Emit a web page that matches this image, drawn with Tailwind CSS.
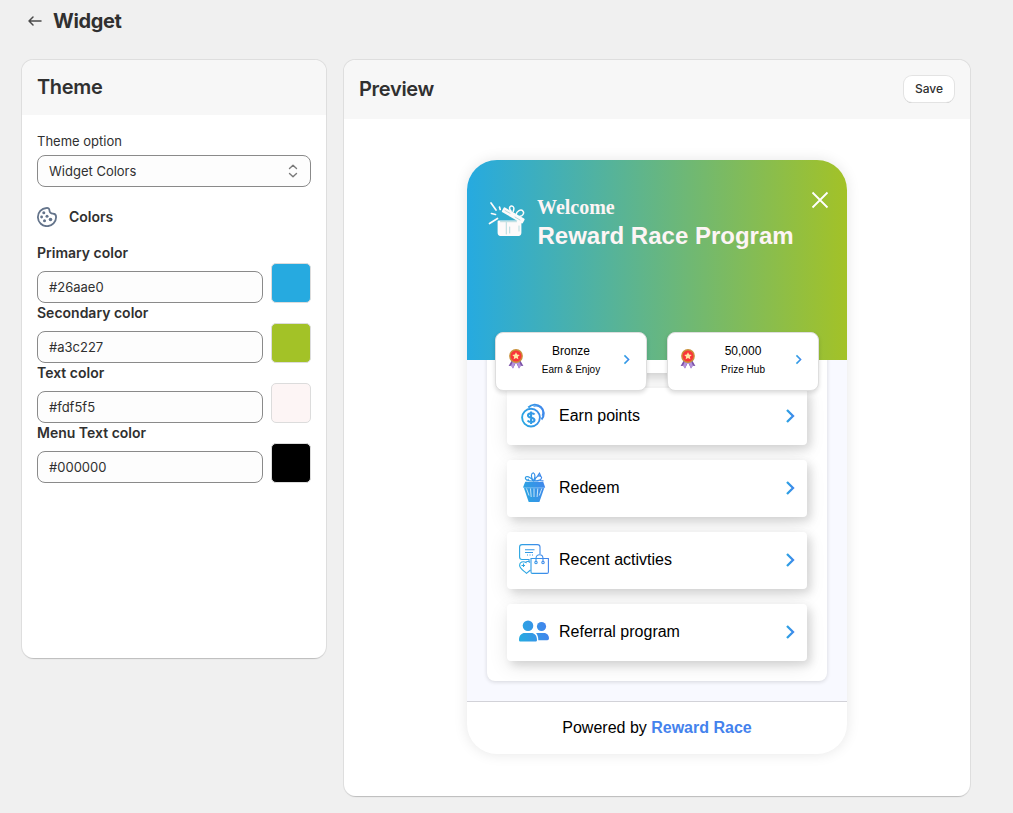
<!DOCTYPE html>
<html lang="en">
<head>
<meta charset="utf-8">
<title>Widget</title>
<script src="https://cdn.jsdelivr.net/npm/@tailwindcss/browser@4"></script>
</head>
<body class="w-[1013px] h-[813px] overflow-hidden bg-[#f0f0f0] font-[Inter,sans-serif] text-[#303030] text-[13px] leading-5">
<svg class="absolute size-0" aria-hidden="true">
  <defs>
    <linearGradient id="blueC" gradientUnits="userSpaceOnUse" x1="0" y1="8" x2="10" y2="8"><stop offset="0" stop-color="#26aae0"/><stop offset="1" stop-color="#4482ed"/></linearGradient>
    <linearGradient id="blueU" gradientUnits="userSpaceOnUse" x1="0" y1="20" x2="30" y2="12"><stop offset="0" stop-color="#26aae0"/><stop offset="1" stop-color="#4482ed"/></linearGradient>
    <symbol id="medal" viewBox="0 0 16 20">
      <path d="M4 11 .6 17l2.700-.2L5 19.600 8 13.500Z" fill="#7b52a8"/><path d="m12 11 3.400 6-2.700-.2L11 19.600 8 13.500Z" fill="#7b52a8"/>
      <path d="m5 12-2 4.700L5 19.400l2.500-6Z" fill="#b592dc"/><path d="m11 12 2 4.700L11 19.400l-2.500-6Z" fill="#b592dc"/>
      <circle cx="8" cy="7" r="6.900" fill="#c9913a"/><circle cx="8" cy="7" r="5.500" fill="#fa3538"/>
      <path d="m8 3.200 1.150 2.400 2.600.35-1.900 1.800.5 2.600L8 9.100l-2.350 1.250.5-2.600-1.900-1.800 2.600-.35Z" fill="#ffe7a3"/>
    </symbol>
    <symbol id="chev" viewBox="0 0 10 16"><path d="m2 2 6 6-6 6" fill="none" stroke="url(#blueC)" stroke-width="2.300"/></symbol>
  </defs>
</svg>

<header class="flex items-center h-[42px] pl-[27px]">
  <svg class="w-4 h-4" viewBox="0 0 16 16" fill="none" stroke="#4a4a4a" stroke-width="1.500" stroke-linecap="round" stroke-linejoin="round"><path d="M14 8H2M6 4 2 8l4 4"/></svg>
  <h1 class="ml-[10px] text-xl font-bold leading-6 tracking-[-0.350px]">Widget</h1>
</header>

<main class="flex items-start pl-[22px] pt-[17px] gap-[18px]">
  <section class="w-[304px] h-[599px] rounded-xl bg-white overflow-hidden border-t border-[#dedede] shadow-[1px_0_0_#dedede,-1px_0_0_#dedede,0_1px_1px_#bbb]">
    <h2 class="h-[55px] bg-[#f7f7f7] pl-[15px] pt-[15px] text-xl leading-6 font-semibold tracking-[-0.350px]">Theme</h2>
    <div class="px-[15px] pt-4">
      <div class="h-6 leading-[21px]">Theme option</div>
      <div class="h-8 w-[274px] rounded-lg border border-[#8a8a8a] bg-[#fdfdfd] flex items-center justify-between pl-[11px] pr-3">
        <span>Widget Colors</span>
        <svg class="w-[10px] h-[14px]" viewBox="0 0 10 14" fill="none" stroke="#7a7a7a" stroke-width="1.400" stroke-linecap="round" stroke-linejoin="round"><path d="m1.500 4.500 3.500-3.300 3.500 3.300M1.500 9.500 5 12.800l3.500-3.300"/></svg>
      </div>
      <div class="mt-5 h-5 flex items-center gap-3">
        <svg class="w-5 h-5" viewBox="0 0 20 20"><path d="M9.500 1C11.500.8 12.300 1.700 12.400 3c.1 2.300 1.200 3.600 3.500 3.600 2 0 3.200 1.200 3.200 3.400A9.100 9.100 0 1 1 9.500 1Z" fill="none" stroke="#64748b" stroke-width="1.800"/><g fill="#64748b"><circle cx="6.800" cy="5.700" r="1.500"/><circle cx="4.600" cy="10" r="1.400"/><circle cx="10" cy="9.300" r="1.500"/><circle cx="7.500" cy="13.700" r="1.500"/><circle cx="13.500" cy="12.500" r="1.800"/></g></svg>
        <span class="font-semibold text-[14px]">Colors</span>
      </div>
      <div class="mt-4 flex flex-col">
        <div class="h-[60px]"><div class="h-5 font-semibold text-[14px]">Primary color</div><div class="flex items-end gap-2 h-10"><div class="w-[226px] h-8 rounded-lg border border-[#8a8a8a] bg-[#fdfdfd] pl-[11px] leading-[31px]">#26aae0</div><div class="w-10 h-10 rounded-[5px] border border-[#dcdcdc] bg-[#26aae0]"></div></div></div>
        <div class="h-[60px]"><div class="h-5 font-semibold text-[14px]">Secondary color</div><div class="flex items-end gap-2 h-10"><div class="w-[226px] h-8 rounded-lg border border-[#8a8a8a] bg-[#fdfdfd] pl-[11px] leading-[31px]">#a3c227</div><div class="w-10 h-10 rounded-[5px] border border-[#dcdcdc] bg-[#a3c227]"></div></div></div>
        <div class="h-[60px]"><div class="h-5 font-semibold text-[14px]">Text color</div><div class="flex items-end gap-2 h-10"><div class="w-[226px] h-8 rounded-lg border border-[#8a8a8a] bg-[#fdfdfd] pl-[11px] leading-[31px]">#fdf5f5</div><div class="w-10 h-10 rounded-[5px] border border-[#dcdcdc] bg-[#fdf5f5]"></div></div></div>
        <div class="h-[60px]"><div class="h-5 font-semibold text-[14px]">Menu Text color</div><div class="flex items-end gap-2 h-10"><div class="w-[226px] h-8 rounded-lg border border-[#8a8a8a] bg-[#fdfdfd] pl-[11px] leading-[31px]">#000000</div><div class="w-10 h-10 rounded-[5px] border border-[#dcdcdc] bg-black"></div></div></div>
      </div>
    </div>
  </section>

  <section class="w-[626px] h-[737px] rounded-xl bg-white overflow-hidden border-t border-[#dedede] shadow-[1px_0_0_#dedede,-1px_0_0_#dedede,0_1px_1px_#bbb]">
    <div class="h-[59px] bg-[#f7f7f7] flex items-center justify-between pl-[15px] pr-4">
      <h2 class="text-xl leading-6 font-semibold tracking-[-0.300px] -mt-[2px]">Preview</h2>
      <button class="w-[50px] h-[26px] -mt-px rounded-lg bg-white font-medium text-[12px] leading-4 shadow-[0_0_0_1px_#e3e3e3,0_1px_0_0_#b5b5b5]">Save</button>
    </div>

    <div class="relative mt-[41px] ml-[123px] w-[380px] h-[594px] rounded-[30px] bg-white flex flex-col font-['Liberation_Sans',sans-serif] text-black shadow-[0_0_14px_rgba(0,0,0,0.100)]">
      <div class="h-[200px] shrink-0 rounded-t-[30px] bg-linear-to-r/srgb from-[#26aae0] to-[#a3c227] flex items-start pl-[21px] pr-[18px] pt-[35px] text-[#fdf5f5]">
        <svg class="w-[38px] h-[38px] mt-[5px]" viewBox="0 0 38 38" fill="none" stroke="#fdfafa" stroke-linecap="round" stroke-linejoin="round">
          <path d="m3 3 5 7M1.500 23.500l8-5M3.500 13.500l4 1M11.500 7l.7 2.500" stroke-width="1.700"/>
          <path d="m16.500 8.500 19 11-1.500 2.800-19-11Z" fill="#fdfafa" stroke-width="2.200"/>
          <path d="M23 11c-3-3-.5-6.500 2-4.500 1.500 1.200.8 3.500.2 5M28 15c.5-4 5-6.300 7-3.800 1.800 2.400-1 5-3 5.100" stroke-width="1.500"/>
          <path d="M10.500 21.500h22v11q0 2.500-2 2.500h-18q-2 0-2-2.500Z" fill="#fdfafa" stroke-width="1.800"/>
          <path d="M18.300 22.500v11.500M21.700 27v6M12.500 21.700h16M31 26v5M17 10.500l5 2.800M27 17l5 3" stroke="#a5d3d8" stroke-width=".8"/>
        </svg>
        <div class="ml-[12px] flex-1">
          <div class="font-['Liberation_Serif',serif] font-bold text-[20px] leading-6 -ml-px">Welcome</div>
          <div class="font-bold text-[24px] leading-[33px] whitespace-nowrap -ml-[0.500px]">Reward Race Program</div>
        </div>
        <svg class="w-[18px] h-[18px] -mt-[4px]" viewBox="0 0 18 18" stroke="#fff" stroke-width="1.800"><path d="m1.500 1.500 15 15m0-15-15 15"/></svg>
      </div>

      <div class="h-[341px] shrink-0 overflow-hidden bg-[#f8f9ff] px-5">
        <div class="-mt-16 h-[385px] rounded-lg bg-white p-5 flex flex-col gap-[15px] overflow-hidden shadow-[0_1px_4px_rgba(0,0,0,0.140)]">
          <div class="h-[57px] shrink-0 rounded bg-white shadow-[4px_4px_8px_rgba(0,0,0,0.120),0_6px_20px_rgba(0,0,0,0.090)]"></div>
          <div class="h-[57px] shrink-0 rounded bg-white flex items-center pl-3 pr-3 pb-[3px] shadow-[4px_4px_8px_rgba(0,0,0,0.120),0_6px_20px_rgba(0,0,0,0.090)]">
            <svg class="w-[30px] h-[30px]" viewBox="0 0 30 30" fill="none" stroke="url(#blueU)" stroke-width="1.900"><path d="M9.300 7.500A8.700 8.700 0 1 1 22.500 19.500"/><path d="M14.500 6.300a7 7 0 0 1 8.700 9.500" stroke-width="1.200"/><circle cx="12" cy="17.600" r="8.900"/><path d="M15.500 14.500c-1-1.700-6.500-1.700-6.500.9 0 3 6.500 1.500 6.500 4.500 0 2.600-5.700 2.600-6.900.6M12.100 11.600v12.300" stroke-width="2.100"/></svg>
            <span class="ml-[10px] flex-1 text-base leading-5 pt-[2px]">Earn points</span>
            <svg class="w-[10px] h-4 mt-px"><use href="#chev"/></svg>
          </div>
          <div class="h-[57px] shrink-0 rounded bg-white flex items-center pl-3 pr-3 pb-[3px] shadow-[4px_4px_8px_rgba(0,0,0,0.120),0_6px_20px_rgba(0,0,0,0.090)]">
            <svg class="w-[30px] h-[30px]" viewBox="0 0 30 30"><path d="M6.200 9.700h18l2 5.800H4Z" fill="url(#blueU)"/><path d="M4.600 15h21l-5.200 15H9.700Z" fill="url(#blueU)"/><path d="m7.500 16.500 2.500 7M11.500 16.500l.7 8.500M15 16.500v8.500M18.800 16.500l-.7 8.500M22.800 16.500l-2.500 7" stroke="#d6edfb" stroke-width=".9"/><path d="M5 15.800h20" stroke="#a9d5f6" stroke-width=".6"/><g fill="none" stroke="url(#blueU)" stroke-width="1.200"><path d="M14.500 9C8 9 5 7 7 4.800c3-1 5 1.200 7.500 4.200ZM14.500 9C11.500 5 12 1.500 14.200.8c2.500 1.200 2 4.700.3 8.200ZM15.500 9c1-5 5-6.500 7-4 .5 3-3 4-7 4ZM18.500 4l2-2.800 1.300 3M7.500 8.900l2.500-2M21 8.500l3.500.4"/></g></svg>
            <span class="ml-[10px] flex-1 text-base leading-5 pt-[2px]">Redeem</span>
            <svg class="w-[10px] h-4 mt-px"><use href="#chev"/></svg>
          </div>
          <div class="h-[57px] shrink-0 rounded bg-white flex items-center pl-3 pr-3 pb-[3px] shadow-[4px_4px_8px_rgba(0,0,0,0.120),0_6px_20px_rgba(0,0,0,0.090)]">
            <svg class="w-[30px] h-[30px]" viewBox="0 0 30 30" fill="none" stroke="url(#blueU)" stroke-width="1.100"><path d="M10 18v-2.500H3Q.6 15.500.6 13V3Q.6.600 3 .6h15.500Q21 .6 21 3v7M6 5.700h9.500M6 8.500h8"/><path d="M8 11h1m1.500 0h1m1.500 0h1"/><path d="M12 14.500h17.400V28q0 1.400-1.400 1.400H13.400Q12 29.400 12 28ZM17 18v-3.500c0-5 7-5 7 0V18"/><circle cx="17" cy="18.500" r="1.200"/><circle cx="24" cy="18.500" r="1.200"/><path d="M11 18.500c-2-2-4-.5-4 0-3-1.800-6.400-.3-6.400 2.800 0 3.200 3.500 5 6.900 8l4-3.300M2.500 21.500h3.500M4.500 19.500v3.500"/></svg>
            <span class="ml-[10px] flex-1 text-base leading-5 pt-[2px]">Recent activties</span>
            <svg class="w-[10px] h-4 mt-px"><use href="#chev"/></svg>
          </div>
          <div class="h-[57px] shrink-0 rounded bg-white flex items-center pl-3 pr-3 pb-[3px] shadow-[4px_4px_8px_rgba(0,0,0,0.120),0_6px_20px_rgba(0,0,0,0.090)]">
            <svg class="w-[30px] h-[30px]" viewBox="0 0 30 30" fill="url(#blueU)"><circle cx="9" cy="9.700" r="5.300"/><circle cx="22.500" cy="10.500" r="4.600"/><path d="M0 24C0 19 3 17 5.500 17h7c2.500 0 5.500 2 5.500 7 0 1-.7 1.500-1.500 1.500h-15C.7 25.500 0 25 0 24ZM18.500 17H25c3 0 5 2.500 5 5.300 0 1.300-.7 2-1.700 2h-9c0-3-.7-5.500-2.300-7Z"/></svg>
            <span class="ml-[10px] flex-1 text-base leading-5 pt-[2px]">Referral program</span>
            <svg class="w-[10px] h-4 mt-px"><use href="#chev"/></svg>
          </div>
        </div>
      </div>
      <div class="flex-1 border-t border-[#d2d2d8] text-center text-base leading-[51px]">Powered by <span class="font-bold text-[#4482ed]">Reward Race</span></div>

      <div class="absolute left-7 top-[172px] flex gap-5">
        <div class="w-[152px] h-[59px] rounded-lg border border-[#dedede] bg-white flex items-center pl-3 pr-4 shadow-[0_2px_4px_rgba(0,0,0,0.140)]">
          <svg class="w-4 h-5 -mt-[5px]"><use href="#medal"/></svg>
          <div class="flex-1 text-center -mt-px -ml-[5px]"><div class="text-xs leading-[18px]">Bronze</div><div class="text-[10px] leading-5">Earn &amp; Enjoy</div></div>
          <svg class="w-[7px] h-[11px] -mt-[4px]"><use href="#chev"/></svg>
        </div>
        <div class="w-[152px] h-[59px] rounded-lg border border-[#dedede] bg-white flex items-center pl-3 pr-4 shadow-[0_2px_4px_rgba(0,0,0,0.140)]">
          <svg class="w-4 h-5 -mt-[5px]"><use href="#medal"/></svg>
          <div class="flex-1 text-center -mt-px -ml-[5px]"><div class="text-xs leading-[18px]">50,000</div><div class="text-[10px] leading-5">Prize Hub</div></div>
          <svg class="w-[7px] h-[11px] -mt-[4px]"><use href="#chev"/></svg>
        </div>
      </div>
    </div>
  </section>
</main>
</body>
</html>
